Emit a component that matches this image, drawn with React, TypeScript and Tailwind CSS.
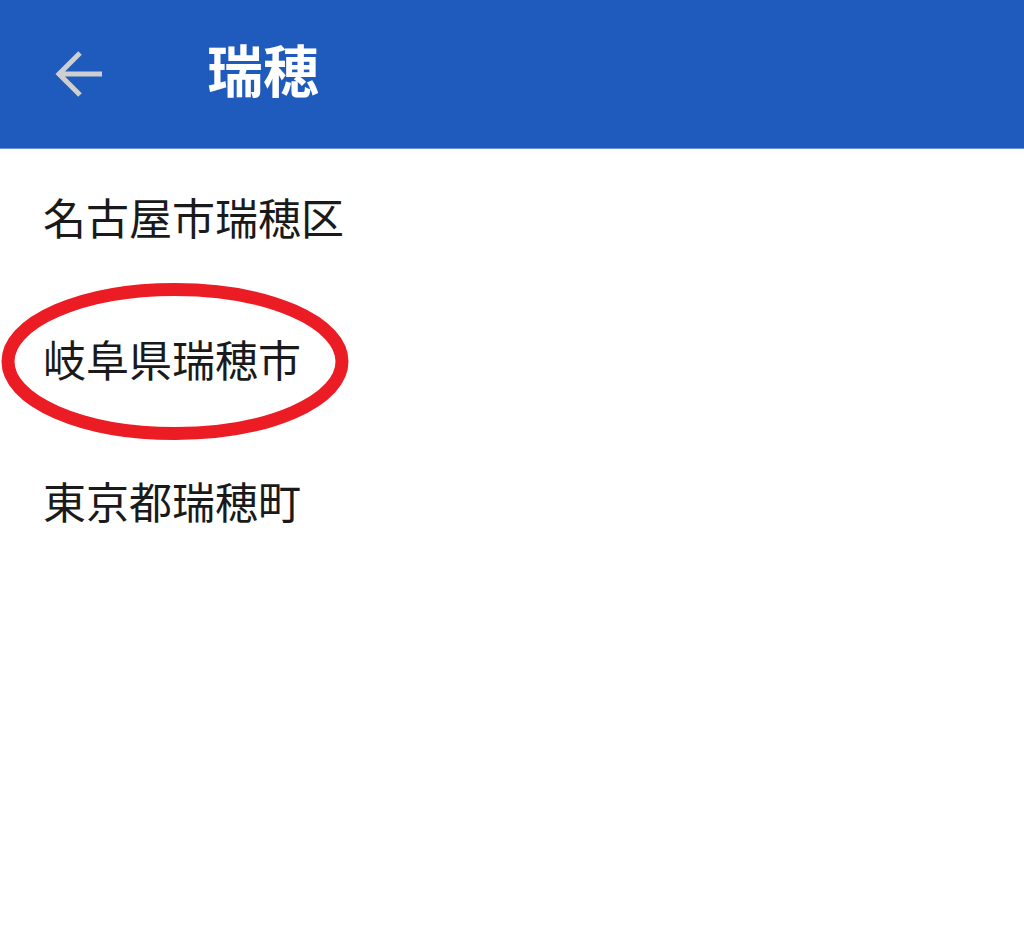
import React from "react";

const font = { fontFamily: '"Noto Sans CJK JP", "Noto Sans", sans-serif' };

export default function App() {
  const items = ["名古屋市瑞穂区", "岐阜県瑞穂市", "東京都瑞穂町"];
  return (
    <div className="w-[1024px] h-[943px] bg-white relative overflow-hidden" style={font}>
      <div className="h-[149px] bg-[#1f5bbd] border-b border-[#6a92d6] flex items-center">
        <div className="w-[207px] flex items-center pl-[55px]">
          <svg width="50" height="48" viewBox="0 0 50 48" fill="none">
            <path d="M47 24H5M25 3L4 24L25 45" stroke="#cfcfcf" strokeWidth="5" strokeLinecap="butt" strokeLinejoin="miter" />
          </svg>
        </div>
        <div className="text-white font-bold text-[56px] leading-none -mt-[12px]">瑞穂</div>
      </div>
      <div className="flex flex-col -mt-[4px]">
        {items.map((t) => (
          <div key={t} className="h-[142px] flex items-center pl-[43px] text-[43px] leading-none text-[#1a1a1a]">
            {t}
          </div>
        ))}
      </div>
      <svg className="absolute left-0 top-0 pointer-events-none" width="1024" height="943">
        <ellipse cx="175" cy="361.5" rx="167" ry="72" fill="none" stroke="#ec1c24" strokeWidth="13" />
      </svg>
    </div>
  );
}
